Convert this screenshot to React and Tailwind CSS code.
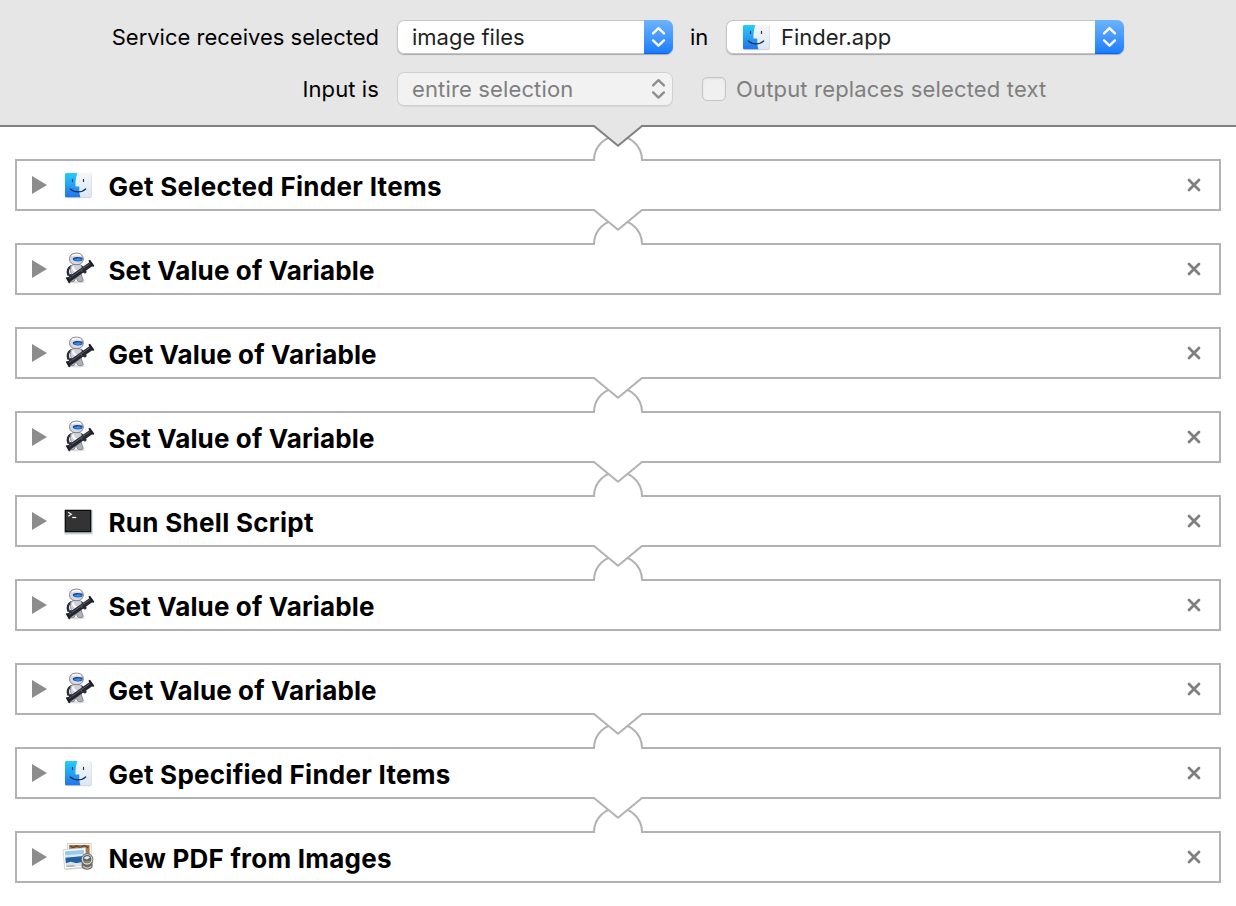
import React from "react";

const FONT = "font-['Inter','Liberation_Sans',sans-serif]";

function FinderIcon({ id }) {
  return (
    <svg width="30" height="30" viewBox="0 0 30 30" className="block shrink-0">
      <defs>
        <linearGradient id={`${id}-blue`} x1="0" y1="0" x2="0" y2="1">
          <stop offset="0" stopColor="#26cdf9" />
          <stop offset="1" stopColor="#2472ee" />
        </linearGradient>
        <linearGradient id={`${id}-white`} x1="0" y1="0" x2="0" y2="1">
          <stop offset="0" stopColor="#f6f6f8" />
          <stop offset="1" stopColor="#dae8f5" />
        </linearGradient>
      </defs>
      <rect x="1" y="3.4" width="27" height="25" rx="1.8" fill="#000" opacity=".07" />
      <rect x="1.2" y="3.2" width="26.4" height="24.6" rx="1.5" fill="#000" opacity=".14" />
      <rect x="1" y="3" width="26.4" height="24.2" rx="1.3" fill={`url(#${id}-white)`} />
      <path d="M2.3 3H13.4C12 7 11.3 11.5 11.5 16.4H15.3C15.1 20.5 15.4 24 16.4 27.2H2.3A1.3 1.3 0 0 1 1 25.9V4.3A1.3 1.3 0 0 1 2.3 3Z" fill={`url(#${id}-blue)`} />
      <path d="M8.5 9.4V11.4M19.5 9.4V11.4" stroke="#173a5c" strokeWidth="1.2" strokeLinecap="round" />
      <path d="M6.3 19C10.5 22.8 17.8 22.8 21.7 19" fill="none" stroke="#182f4c" strokeWidth="1.2" strokeLinecap="round" />
    </svg>
  );
}

function AutomatorIcon() {
  return (
    <svg width="32" height="36" viewBox="0 0 32 36" className="block shrink-0">
      <ellipse cx="12" cy="31.2" rx="9" ry="1.2" fill="#000" opacity=".12" />
      <path d="M6.8 15.5C4 17 3.3 20.5 4.3 23.5M17.5 15.5L20 18.5" fill="none" stroke="#2b2c33" strokeWidth="2.5" strokeLinecap="round" />
      <path d="M7.5 24L5.5 29.8C6 31 10 31 10.6 29.8L12 26L13.6 29.8C15 31.2 19.3 31 19.3 29.3L17 23Z" fill="#aeb0ba" stroke="#6a6c77" strokeWidth=".7" />
      <path d="M7 15C8.5 12.5 15.8 12.5 17.5 15C19 18.5 18 22.5 15.8 24.8C13 26.3 9.8 25.8 8 24C6 21 5.8 17.5 7 15Z" fill="#cfd0d9" stroke="#777984" strokeWidth=".8" />
      <path d="M9 16.3C9.5 19 10.5 20 12.5 20.5" fill="none" stroke="#f8f8fb" strokeWidth="2.2" strokeLinecap="round" />
      <rect x="5.5" y="2.2" width="13.8" height="11.4" rx="5.6" fill="#d8d9e1" stroke="#777984" strokeWidth=".9" />
      <path d="M8.5 4.5C10.5 3 14.5 3 16.5 4.5" fill="none" stroke="#fff" strokeWidth="1.5" strokeLinecap="round" />
      <path d="M8.8 7.2C11 5.6 15.5 5.6 18.7 6.8L18.4 9.2C16.5 10.8 11 10.8 9 9Z" fill="#224a8a" />
      <path d="M10 8.8C12 7 16 7 18 8.6C16 10.2 12 10.2 10 8.8Z" fill="#2c95ff" />
      <path d="M4 29.3L27.5 12.8" stroke="#24252f" strokeWidth="5" />
      <path d="M5.2 27.3L26.7 12.1" stroke="#63647a" strokeWidth=".9" />
      <path d="M3 27L5.4 31.2M25.6 9.8L29.2 14.8" stroke="#1c1d25" strokeWidth="2" strokeLinecap="round" />
      <circle cx="6.3" cy="24.5" r="1.6" fill="#292a32" />
      <path d="M14.5 20.5L17 19L18 21" fill="none" stroke="#4d4f61" strokeWidth="1.4" />
      <circle cx="20.8" cy="20.8" r="1.8" fill="#292a32" />
    </svg>
  );
}

function TerminalIcon() {
  return (
    <svg width="32" height="30" viewBox="0 0 32 30" className="block shrink-0">
      <rect x="0" y="3.5" width="29" height="25.5" rx="1.5" fill="#6c8992" opacity=".16" />
      <rect x=".3" y="4" width="28" height="24" rx="1" fill="#b8c6ca" opacity=".75" />
      <rect x=".8" y="3.8" width="26.5" height="22.5" rx=".6" fill="#0c0c0c" />
      <rect x="2" y="5" width="24" height="19.9" fill="#333" />
      <path d="M4.2 6.3L7.4 8.3L4.2 10.3" fill="none" stroke="#f1f1f1" strokeWidth="1.2" />
      <path d="M8.2 11.5H12.2" stroke="#fff" strokeWidth="1.2" />
    </svg>
  );
}

function PreviewIcon() {
  return (
    <svg width="34" height="34" viewBox="0 0 34 34" className="-ml-0.5 block shrink-0">
      <g transform="translate(.4 1.2)">
        <rect x="5.2" y="2.2" width="23.5" height="20.5" fill="#fff" stroke="#c6c6c6" strokeWidth=".8" />
        <rect x="6.7" y="3.7" width="20.5" height="17" fill="#a47b4b" />
        <path d="M8 5L11 6.5L14 4.5L18 6.3L22 4.3L26 6.5" fill="none" stroke="#5e462c" strokeWidth="1.3" />
        <g transform="rotate(-5 14 18)">
          <rect x="2" y="8.3" width="22.5" height="19.5" fill="#000" opacity=".18" />
          <rect x="1.5" y="7.4" width="22.5" height="19.4" fill="#fff" stroke="#c3c6ca" strokeWidth=".7" />
          <rect x="3.2" y="9.2" width="19" height="15.8" fill="#9bc9ef" />
          <rect x="3.2" y="13.2" width="19" height="2.4" fill="#dcecf8" />
          <path d="M3.2 15.6H22.2V21.8H3.2Z" fill="#2461a4" />
          <path d="M3.2 21L8 20L14 22L22.2 21V25H3.2Z" fill="#d9e7ec" />
          <path d="M3.2 23.6L10 23.4L13 25H3.2Z" fill="#b9a889" />
        </g>
        <path d="M19.2 20V25.5C20.2 29.5 29 29.5 30.2 25.5V20Z" fill="#716d66" />
        <path d="M20.7 25C22.5 27.4 27 27.4 28.8 25" fill="none" stroke="#c6c2ba" strokeWidth="1.4" />
        <circle cx="24.7" cy="18.2" r="5.8" fill="#d8d5ce" stroke="#5d5a55" strokeWidth=".9" />
        <circle cx="24.7" cy="18" r="4.1" fill="#56646b" />
        <path d="M21.5 17C23 14.7 26 14.4 27.6 16.2L24.6 18.4Z" fill="#e6eef0" />
        <path d="M22.3 19.9C24 21.3 26 21.1 27.4 19.7" fill="none" stroke="#b69565" strokeWidth="1.1" />
      </g>
    </svg>
  );
}

function Arrows({ color }) {
  return (
    <svg width="16" height="24" viewBox="0 0 16 24" fill="none" stroke={color} strokeWidth="2.4" strokeLinecap="round" strokeLinejoin="round" className="block">
      <path d="M2.1 8.4L7.5 3.2L12.9 8.4M2.1 15.4L7.5 20.6L12.9 15.4" />
    </svg>
  );
}

function Select({ children, width, disabled }) {
  return (
    <div
      className={`flex h-[34px] shrink-0 items-stretch overflow-hidden rounded-[7px] ${width} ${
        disabled
          ? "bg-[#f2f2f2] text-[#7f7f7f] shadow-[inset_0_0_0_1px_#d0d0d0,0_1px_0_#d6d6d6]"
          : "bg-white text-[#1f1f1f] shadow-[inset_0_0_0_1px_#c4c4c4,0_1px_1px_#a8a8a8]"
      }`}
    >
      <div className="flex flex-1 items-center pl-[15px]">{children}</div>
      <div
        className={`flex w-[29px] items-center justify-center ${
          disabled ? "" : "bg-linear-to-b from-[#6cb3fa] to-[#147bff] shadow-[inset_0_-1px_0_#0a66f5]"
        }`}
      >
        <Arrows color={disabled ? "#8e8e8e" : "#fff"} />
      </div>
    </div>
  );
}

function Connector({ stroke, fill }) {
  return (
    <svg width="50" height="37" viewBox="0 0 50 37" fill="none" strokeWidth="2" className="absolute -top-[34px] left-[578px] block">
      <rect x="2" y="33" width="46" height="4" fill="#fff" />
      <rect x="2" y="0" width="46" height="3" fill={fill} />
      <path d="M0 35H1A24 24 0 0 1 49 35H50" stroke="#b2b2b2" />
      <path d="M0 0H50V1H49L25 20.8L1 1H0Z" fill={fill} />
      <path d="M0 1H1L25 20.8L49 1H50" stroke={stroke} />
    </svg>
  );
}

const ICONS = {
  finder: FinderIcon,
  automator: AutomatorIcon,
  terminal: TerminalIcon,
  preview: PreviewIcon,
};

const ACTIONS = [
  { title: "Get Selected Finder Items", icon: "finder", linked: true, spacing: "tracking-[0.29px]" },
  { title: "Set Value of Variable", icon: "automator", linked: true, spacing: "tracking-[0.14px]" },
  { title: "Get Value of Variable", icon: "automator", linked: false, spacing: "tracking-[0.12px]" },
  { title: "Set Value of Variable", icon: "automator", linked: true, spacing: "tracking-[0.14px]" },
  { title: "Run Shell Script", icon: "terminal", linked: true, spacing: "tracking-[0.3px]" },
  { title: "Set Value of Variable", icon: "automator", linked: true, spacing: "tracking-[0.14px]" },
  { title: "Get Value of Variable", icon: "automator", linked: false, spacing: "tracking-[0.12px]" },
  { title: "Get Specified Finder Items", icon: "finder", linked: true, spacing: "tracking-[0.26px]" },
  { title: "New PDF from Images", icon: "preview", linked: true, spacing: "tracking-[0.23px]" },
];

function ActionRow({ action, index }) {
  const Icon = ICONS[action.icon];
  return (
    <li className="relative flex h-[52px] items-center border-2 border-[#b2b2b2] bg-white pr-[17px] pl-[14px]">
      {action.linked && (
        <div className="absolute -top-0.5 -left-0.5">
          <Connector stroke={index === 0 ? "#808080" : "#b2b2b2"} fill={index === 0 ? "#e6e6e6" : "#fff"} />
        </div>
      )}
      <svg width="17" height="20" viewBox="0 0 17 20" className="block shrink-0">
        <path d="M1 1L16 10L1 19Z" fill="#8c8c8c" />
      </svg>
      <div className="ml-[15px] flex w-[34px] items-center justify-start pl-px">
        <Icon id={`row-${index}`} />
      </div>
      <h2 className={`ml-[11px] flex-1 pt-[3px] pl-[0.4px] text-[26px] leading-8 font-bold whitespace-nowrap text-black ${action.spacing}`}>
        {action.title}
      </h2>
      <svg width="14" height="14" viewBox="0 0 14 14" className="mr-px block shrink-0" fill="none" stroke="#7f7f7f" strokeWidth="2.8" strokeLinecap="round">
        <path d="M2 2L12 12M12 2L2 12" />
      </svg>
    </li>
  );
}

export default function App() {
  return (
    <main className={`h-[906px] w-[1236px] overflow-hidden bg-white ${FONT}`}>
      <header className="flex h-[127px] flex-col gap-[18px] border-b-2 border-[#808080] bg-[#e6e6e6] pt-5 text-[22px] leading-7 whitespace-nowrap text-black">
        <div className="flex h-[34px] items-center">
          <span className="w-[379px] text-right">Service receives selected</span>
          <div className="ml-[18px] flex">
            <Select width="w-[276px]"><span>image files</span></Select>
          </div>
          <span className="ml-[17px] w-[36px]">in</span>
          <Select width="w-[398px]">
            <span className="pl-px"><FinderIcon id="target" /></span>
            <span className="ml-[9px]">Finder.app</span>
          </Select>
        </div>
        <div className="flex h-[34px] items-center">
          <span className="w-[379px] text-right tracking-[0.1px]">Input is</span>
          <div className="ml-[18px] flex">
            <Select width="w-[276px]" disabled><span className="tracking-[0.14px]">entire selection</span></Select>
          </div>
          <span className="ml-[29px] size-6 rounded-[5px] border border-[#c4c4c4] bg-[#f0f0f0] shadow-[inset_0_1px_2px_#dedede]" />
          <span className="ml-[10px] tracking-[0.17px] text-[#7f7f7f]">Output replaces selected text</span>
        </div>
      </header>
      <ul className="flex flex-col gap-8 px-[15px] pt-8">
        {ACTIONS.map((action, index) => (
          <ActionRow key={index} action={action} index={index} />
        ))}
      </ul>
    </main>
  );
}
